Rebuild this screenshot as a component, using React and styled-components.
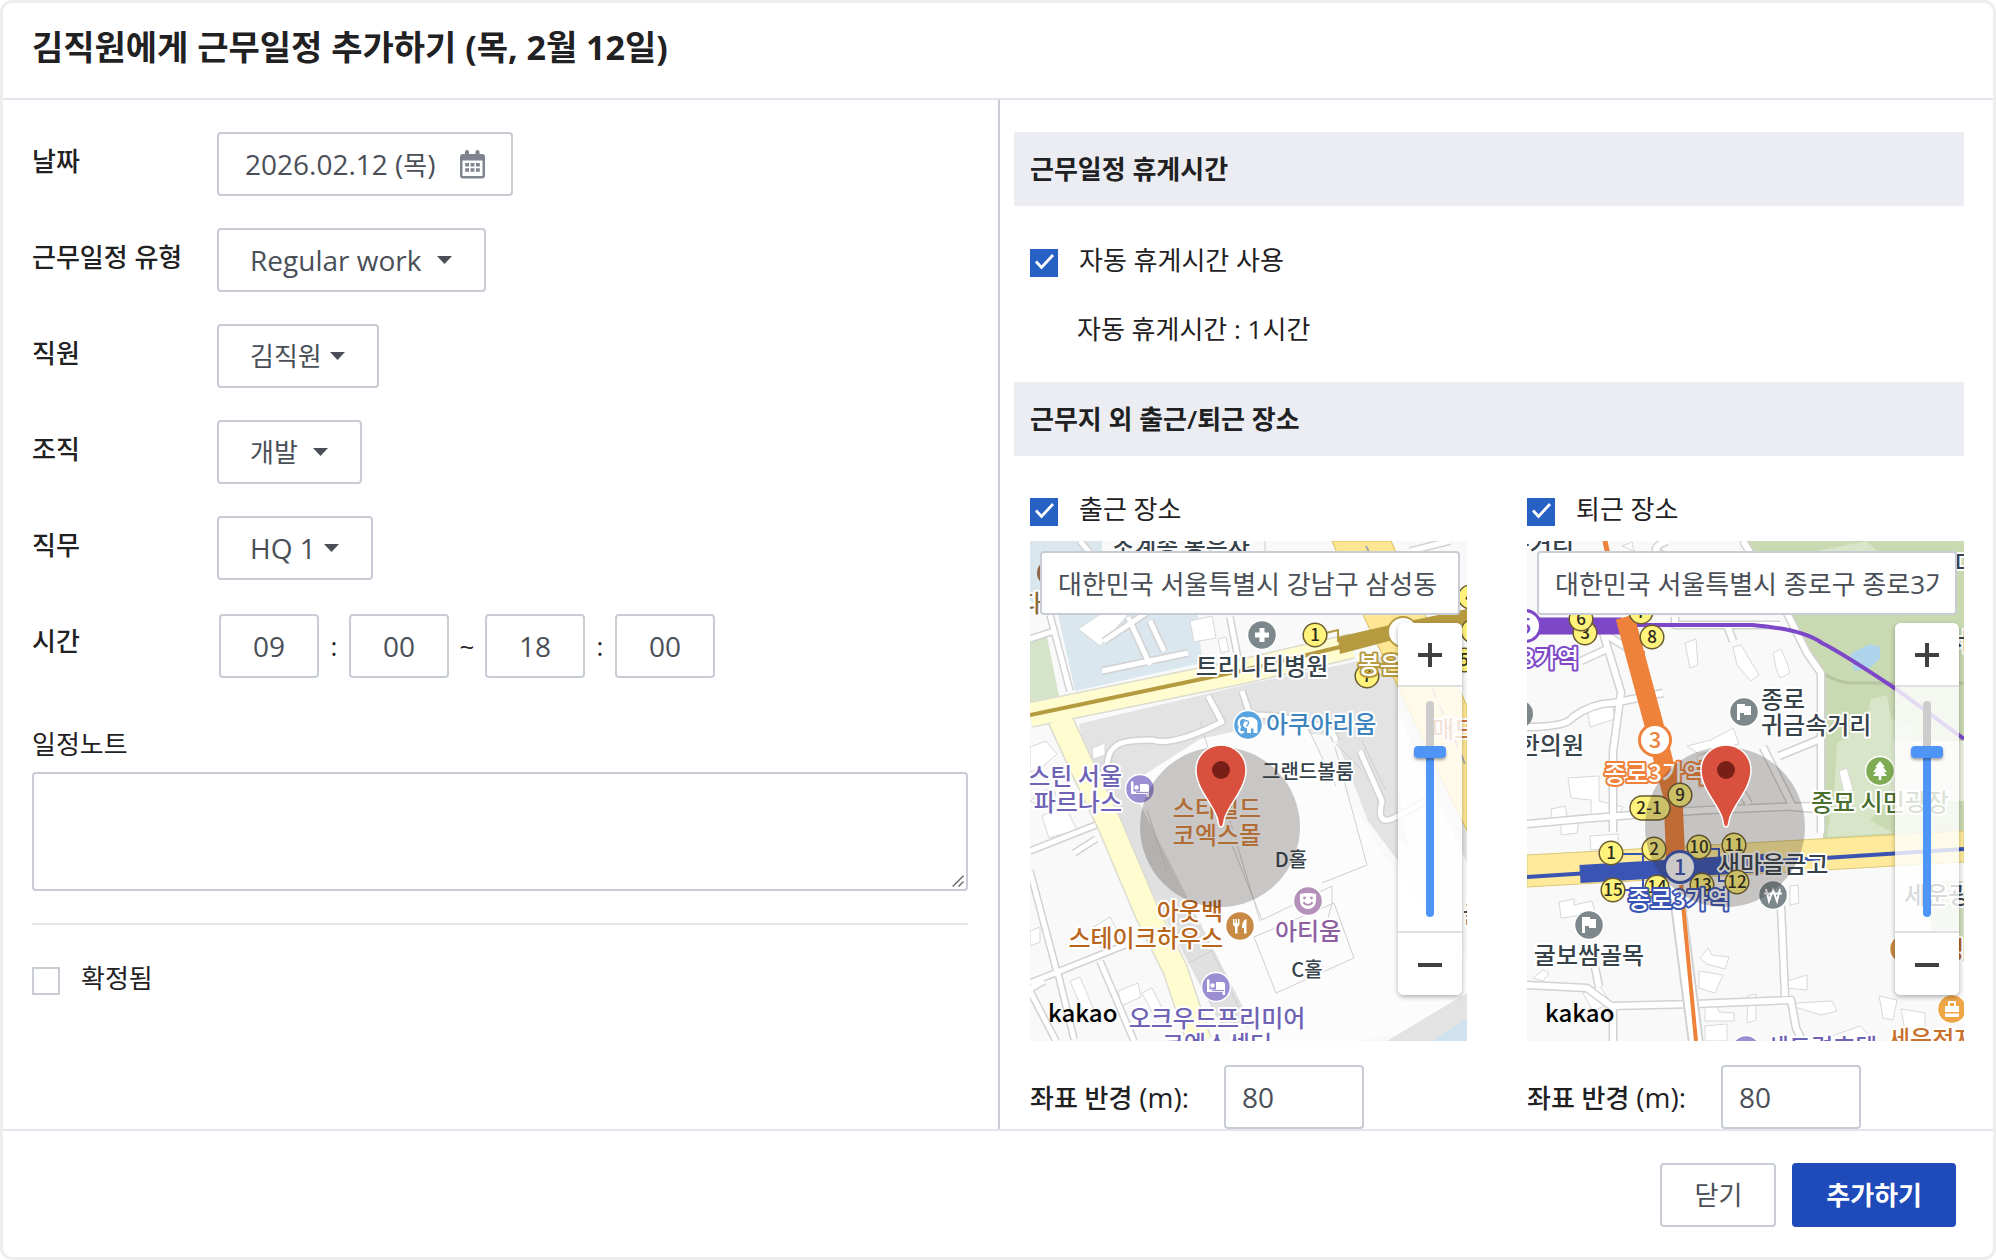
import React, { useState } from "react";
import styled, { createGlobalStyle } from "styled-components";

const GlobalStyle = createGlobalStyle`
*{
  box-sizing:border-box;
}
body{
  margin:0;
  background:#fff;
}
body, button, input, select, textarea{
  font-family:"Open Sans","Noto Sans CJK KR",sans-serif;
  font-size:26px;
  line-height:36px;
  color:#1f2123;
}
`;

const Modal = styled.div`
display:flex;
flex-direction:column;
height:100vh;
border:3px solid #eee;
border-radius:12px;
background:#fff;
overflow:hidden;
`;

const Header = styled.header`
padding:20px 29px 27px;
border-bottom:2px solid #e4e5ec;
& h1{
  margin:0;
  font-size:34px;
  line-height:48px;
  font-weight:bold;
}
`;

const Body = styled.div`
display:grid;
grid-template-columns:1fr 1fr;
flex:1;
min-height:0;
`;

const LeftPane = styled.section`
padding:32px 30px 0 29px;
overflow:hidden;
`;

const RightPane = styled.section`
padding:32px 29px 0 14px;
border-left:2px solid #c8ccd5;
overflow:hidden;
`;

const Fields = styled.div`
display:flex;
flex-direction:column;
gap:32px;
`;

const FieldRow = styled.div`
display:flex;
align-items:center;
height:64px;
`;

const FieldLabel = styled.label`
width:185px;
padding-bottom:6px;
font-weight:500;
`;

// latin letters and digits run one step larger than hangul
const Latin = styled.span`
font-size:28px;
`;

const boxBorder = `
border:2px solid #c8ccd5;
border-radius:4px;
background:#fff;
color:#4a4f57;
`;

const DateButton = styled.button`
${boxBorder}
display:flex;
align-items:center;
gap:24px;
height:64px;
padding:0 26px;
color:#4a4f57;
cursor:pointer;
`;

const SelectBox = styled.div`
${boxBorder}
display:flex;
align-items:center;
gap:${(props) => (props.$wide ? "15px" : "8px")};
height:64px;
padding:0 32px 0 31px;
& select{
  appearance:none;
  border:none;
  outline:none;
  padding:0;
  background:none;
  font-size:${(props) => (props.$latin ? "28px" : "26px")};
  color:#4a4f57;
}
`;

const TimeRow = styled.div`
display:flex;
align-items:center;
padding:4px 0 0 2px;
`;

const TimeInput = styled.input`
${boxBorder}
width:100px;
height:64px;
font-size:28px;
text-align:center;
`;

const TimeMark = styled.span`
width:${(props) => (props.$wide ? "36px" : "30px")};
text-align:center;
`;

const NoteLabel = styled.label`
display:block;
margin:50px 0 10px;
`;

const resizeGrip = `url("data:image/svg+xml,%3Csvg xmlns='http://www.w3.org/2000/svg' viewBox='0 0 18 18'%3E%3Cpath d='M2 15L15 2M9 15l6-6' fill='none' stroke='%23666' stroke-width='1.6'/%3E%3C/svg%3E")`;

const Note = styled.textarea`
${boxBorder}
display:block;
width:100%;
height:119px;
padding:12px;
resize:vertical;
&::-webkit-scrollbar{
  width:18px;
  height:18px;
}
&::-webkit-resizer{
  background:${resizeGrip} no-repeat;
}
`;

const Divider = styled.hr`
margin:32px 0 38px;
border:none;
border-top:2px solid #e8e8e8;
`;

const CheckLabel = styled.label`
display:flex;
align-items:center;
gap:21px;
height:36px;
& span{
  padding-bottom:6px;
}
`;

const checkMark = `url("data:image/svg+xml,%3Csvg xmlns='http://www.w3.org/2000/svg' viewBox='0 0 28 28'%3E%3Cpath d='M6 12.500l5.500 6L23 6' fill='none' stroke='white' stroke-width='2.8'/%3E%3C/svg%3E")`;

const Check = styled.input`
appearance:none;
flex:none;
width:28px;
height:28px;
margin:0;
border:2px solid #c8ccd5;
background:#fff;
&:checked{
  border:none;
  background:#2861c4 ${checkMark};
}
`;

const SectionTitle = styled.h2`
margin:0;
padding:19px 16px;
background:#ecedf2;
font-size:26px;
line-height:36px;
font-weight:600;
`;

const BreakInfo = styled.div`
padding:39px 16px 34px;
& p{
  margin:30px 0 0 47px;
  line-height:37px;
}
`;

const Places = styled.div`
display:grid;
grid-template-columns:1fr 1fr;
gap:60px;
padding:38px 0 0 16px;
`;

const MapBox = styled.div`
position:relative;
height:500px;
margin:11px 0 24px;
overflow:hidden;
& > svg{
  display:block;
  width:100%;
  height:100%;
}
`;

const Address = styled.input`
${boxBorder}
position:absolute;
top:10px;
left:10px;
width:calc(100% - 17px);
height:64px;
padding:0 16px;
`;

const ZoomControl = styled.div`
position:absolute;
top:82px;
right:5px;
display:flex;
flex-direction:column;
width:64px;
height:372px;
border-radius:6px;
overflow:hidden;
background:rgba(255,255,255,0.8);
box-shadow:0 2px 5px rgba(0,0,0,0.3);
`;

const ZoomButton = styled.button`
display:flex;
align-items:center;
justify-content:center;
height:62px;
padding:2px 0 0;
border:none;
background:#fff;
cursor:pointer;
`;

const ZoomTrack = styled.div`
display:flex;
flex:1;
justify-content:center;
padding:14px 0;
border:solid #e0e0e0;
border-width:2px 0;
`;

const ZoomRange = styled.input`
appearance:none;
writing-mode:vertical-lr;
direction:rtl;
width:32px;
height:216px;
margin:0;
background:none;
&::-webkit-slider-runnable-track{
  width:8px;
  border-radius:4px;
  background:linear-gradient(to top, #4f95f7 ${(props) => props.value}%, #ccc ${(props) => props.value}%);
}
&::-webkit-slider-thumb{
  appearance:none;
  width:32px;
  height:12px;
  margin-left:-12px;
  border-radius:4px;
  background:#4f95f7;
  box-shadow:0 2px 3px rgba(0,0,0,0.35);
}
`;

const RadiusRow = styled.div`
display:flex;
align-items:center;
justify-content:space-between;
width:334px;
& label{
  font-weight:500;
}
`;

const RadiusInput = styled.input`
${boxBorder}
width:140px;
height:64px;
padding:0 16px;
font-size:28px;
`;

const Footer = styled.footer`
display:flex;
justify-content:flex-end;
gap:16px;
padding:32px 37px 30px;
border-top:2px solid #e4e5ec;
`;

const Button = styled.button`
height:64px;
padding:0 32px;
border:2px solid ${(props) => (props.$primary ? "#1e4bb9" : "#c8ccd5")};
border-radius:4px;
background:${(props) => (props.$primary ? "#1e4bb9" : "#fff")};
color:${(props) => (props.$primary ? "#fff" : "#4a4f57")};
font-weight:${(props) => (props.$primary ? "bold" : "normal")};
cursor:pointer;
`;

const MapText = styled.text`
font-family:"Noto Sans CJK KR",sans-serif;
font-size:${(props) => (props.$small ? "20px" : "24px")};
font-weight:500;
text-anchor:${(props) => props.$anchor || "middle"};
fill:${(props) => props.$color || "#37434b"};
stroke:${(props) => props.$halo || "#fff"};
stroke-width:4px;
stroke-linejoin:round;
paint-order:stroke;
`;

const KakaoText = styled.text`
font-family:"Noto Sans CJK KR",sans-serif;
font-size:24px;
font-weight:500;
fill:#000;
`;

const ExitText = styled.text`
font-family:"Noto Sans CJK KR",sans-serif;
font-size:17px;
font-weight:500;
text-anchor:middle;
fill:#2b2a20;
`;

const StationText = styled.text`
font-family:"Noto Sans CJK KR",sans-serif;
font-size:22px;
font-weight:500;
text-anchor:middle;
`;

const CalendarIcon = () => (
  <svg width="25" height="29" viewBox="0 0 25 29">
    <path fill="#7f8390" fillRule="evenodd" d="M5 2a2 2 0 0 1 4 0v2h6.500V2a2 2 0 0 1 4 0v2H22a3 3 0 0 1 3 3v18.500a3 3 0 0 1-3 3H3a3 3 0 0 1-3-3V7a3 3 0 0 1 3-3h2zM2.500 10.500v15.500h20V10.500z" />
    <path fill="#7f8390" d="M5.200 13h3.800v3.600H5.200zm5.400 0h3.800v3.600h-3.800zm5.400 0h3.800v3.600H16zM5.200 18.200h3.800v3.600H5.200zm5.400 0h3.800v3.600h-3.800zm5.400 0h3.800v3.600H16z" />
  </svg>
);

const Caret = () => (
  <svg width="15" height="10" viewBox="0 0 15 10">
    <path d="M0 1h15L7.500 9z" fill="#4a4f57" />
  </svg>
);

const glyphs = {
  plus: <path d="M-2.500-7h5v4.500h4.500v5H2.500V7h-5V2.500H-7v-5h4.500z" />,
  flag: <path d="M-7-8h8v2h6v9h-7V1h-4v7h-3z" />,
  bed: (
    <>
      <path d="M-9-7.500h2.500v10H0V-5h6.500A2.500 2.500 0 0 1 9-2.500V8H6.500V5h-13H-9z" />
      <circle cx="-3.500" cy="-1.500" r="2.200" />
      <path d="M-4 3.500H8" stroke="#9b8ed3" strokeWidth="1.200" />
    </>
  ),
  fork: <path d="M-7-7h1.500v4h1v-4h1.500v4h1v-4H-.500v5a3 3 0 0 1-2 2.800V7.500h-2.500V.800a3 3 0 0 1-2-2.800zM6.500-7V7.500H4V2H2c0-4 1-8 4.500-9z" />,
  smile: (
    <>
      <path d="M-8-7Q0-9 8-7V0a8 8 0 0 1-16 0z" />
      <path d="M-4.500 1a5 5 0 0 0 9 0" fill="none" stroke="#b491b9" strokeWidth="1.800" />
      <circle cx="-3.500" cy="-3" r="1.400" fill="#b491b9" />
      <circle cx="3.500" cy="-3" r="1.400" fill="#b491b9" />
    </>
  ),
  elephant: (
    <>
      <path d="M-2-7q4-2 8 0 4 2 3.500 6V8H5.500V3.500H3V8h-4V3q-3 0-4-3z" />
      <path d="M-1-6q-6-3-8 2-1 4 1 6-2 4 1 5.500 2 .500 2.500-1.500" fill="none" stroke="#fff" strokeWidth="2.200" />
      <path d="M-3-4q4-1 3.500 2T-2 1" fill="none" stroke="#59a3de" strokeWidth="1.300" />
    </>
  ),
  won: (
    <path d="M-7-6l3 12L0-5l4 11L7-6M-9-1.500H9" fill="none" stroke="#fff" strokeWidth="2" />
  ),
  tree: <path d="M0-10l5 6H3l4 5H4l3 4H1.300v4h-2.600V5H-7l3-4h-3l4-5h-2z" />,
  bag: (
    <>
      <path d="M-7-3H7v6H-7zM-7 4.500H7V8H-7z" />
      <path d="M-3-3v-4h6v4" fill="none" stroke="#fff" strokeWidth="1.800" />
    </>
  ),
};

const Poi = ({ x, y, color = "#7d888d", icon }) => (
  <g transform={`translate(${x} ${y})`}>
    <circle r="14.500" fill={color} stroke="#fff" strokeWidth="1.500" />
    <g fill="#fff">{glyphs[icon]}</g>
  </g>
);

const Exit = ({ x, y, n }) => (
  <g>
    <circle cx={x} cy={y} r="11.800" fill="#fff37c" stroke="#6a5c30" strokeWidth="1.500" />
    <ExitText x={x} y={y + 6}>{n}</ExitText>
  </g>
);

const Station = ({ x, y, n, color }) => (
  <g>
    <circle cx={x} cy={y} r="15.500" fill="#fff" stroke={color} strokeWidth="3" />
    <StationText x={x} y={y + 8} fill={color}>{n}</StationText>
  </g>
);

// range circle with the pin standing in its centre
const Range = ({ x }) => <circle cx={x} cy="286" r="80" fill="#2e2722" opacity="0.25" />;

const Pin = ({ x }) => (
  <g transform={`translate(${x} 286)`}>
    <path d="M0 0c-3 0-2.500-4-3.500-8C-7-22-25-38-25-57a25 25 0 0 1 50 0C25-38 7-22 3.500-8 2.500-4 3 0 0 0z" fill="#d9503f" stroke="#fff" strokeWidth="1.500" />
    <circle cy="-57" r="9" fill="#782017" />
  </g>
);

// roads are painted twice: grey edge first, then the surface
const Roads = ({ lines, width, color = "#fff", edge = "#d2d2d2" }) => (
  <g fill="none" strokeLinejoin="round">
    {lines.map((d) => <path key={d} d={d} stroke={edge} strokeWidth={width + 3} />)}
    {lines.map((d) => <path key={d} d={d} stroke={color} strokeWidth={width} />)}
  </g>
);

const GangnamMap = () => (
  <svg viewBox="0 0 437 500" preserveAspectRatio="xMidYMid slice" aria-hidden="true">
    <rect width="437" height="500" fill="#f9f9f9" />
    <path d="M0 0h72v10H60v64H25L0 60zM28 74h140l4 48L45 150z" fill="#dae7ef" />
    <path d="M0 94l17 2 12 59-29 6z" fill="#d5e3c8" />
    <path d="M49 183L215 144l153-32v60l69 150v-110L368 146l-10 40 20 120-45-40-28-70-70-12-50 10-120 60z" fill="#e3e3e3" />
    <path d="M49 183l166-39 153-32v80l-64-2L240 200 90 270z" fill="#e3e3e3" />
    <path d="M60 215l22-8 18 46 24-20 66 160 30 90h-30L80 270z" fill="#e0e0e0" />
    <path d="M100 243l70-45 100-22 85 140 82 100v64l-110 20h-97z" fill="#fcfcfc" />
    <path d="M304 190l64-30v160l-30-40z" fill="#e3e3e3" />
    <path d="M437 452l-80 48h80z" fill="#e3e3e3" />
    <path d="M437 478l-36 22h36z" fill="#cfe2ee" />
    <g fill="#fff" stroke="#d8d8d8">
      <path d="M48 88l22 17 28-31-20-6zM160 80l22-5 4 22-22 4zM188 98l8-2 3 14-8 2zM0 206l16-6 11 13-16 14-11 4zM62 207l13-5v12l-12 4z" />
      <path d="M12 275l22-12 13 26-28 8zM0 390l10-4v15l-10 4zM62 387l18-11 15 29-20 11zM40 440l10-4 16 38-8 8zM88 450l20-8 3 14-20 9zM112 452l10-5 12 24-9 6zM0 260l18-12 8 4-8 16z" />
    </g>
    <g fill="none" stroke="#cfcfcf">
      <path d="M117 269l20 60M170 180l60 200M202 304l30 75 70-34v18l-4 14M305 206l32 118-45 18M224 396l80-34 20 55-78 35zM158 422l24-12 36 76M235 0v10M185 10l12-10M272 175l34 70M306 203l25 25M332 200l24 50" />
    </g>
    <Roads
      width={5}
      lines={[
        "M20 74l20 76",
        "M0 98l24-8",
        "M74 100l60-40M98 76l22 48M72 130l86-18M120 80l14 30",
        "M200 76l10 52",
        "M178 155l14 26q-50 25-70 18-30 0-36 6-12 8-8 35",
        "M212 150l8 24q40 0 60 10 22 0 26 16",
        "M0 310l66-26M66 298l-22 14M0 330l28 105M0 442l95-38M28 432l16 66M70 420l34 80M0 450l26 50M14 440l-14 8",
        "M120 0l-6 10M60 12L50 0M380 10l40-10",
        "M330 210l22 50q-6 24 10 18 20-10 38-20",
      ]}
    />
    <path d="M302 0h59l76 165v125l-69-144-35-72z" fill="#fee794" stroke="#d8bd5c" />
    <path d="M336 5l10 20M366 65l70 160" stroke="#a8a8a8" strokeWidth="2" strokeDasharray="10 8" />
    <Roads width={23} color="#fffcd0" edge="#dcdcd0" lines={["M0 174l210-43 112-26", "M30 178l22 48 27 56 38 90 28 56 24 72"]} />
    <path d="M0 174l210-44 100-24" fill="none" stroke="#b59a40" strokeWidth="4" />
    <path d="M308 96l52-12 77-16v15l-74 16-53 14z" fill="#b59a40" />
    <path d="M296 92l12-3v12" fill="none" stroke="#b59a40" strokeWidth="2" />

    <circle cx="20" cy="32" r="13" fill="#8d6748" />
    <MapText x="12" y="71" $anchor="end" $color="#8a6d3b">다</MapText>
    <MapText x="151" y="14">조계종 봉은사</MapText>
    <Exit x={285} y={94} n="1" />
    <Exit x={337} y={135} n="7" />
    <Exit x={440} y={56} n="4" />
    <Exit x={443} y={90} n="6" />
    <Exit x={434} y={119} n="5" />
    <circle cx="373" cy="91" r="15" fill="#fff" stroke="#b59a40" strokeWidth="2" />
    <MapText x="328" y="132" $anchor="start" $color="#fff" $halo="#b59a40">봉은사역</MapText>
    <Poi x={232} y={94} icon="plus" />
    <MapText x="232" y="134">트리니티병원</MapText>
    <Poi x={218} y={184} color="#59a3de" icon="elephant" />
    <MapText x="236" y="192" $anchor="start" $color="#3d84bf">아쿠아리움</MapText>
    <MapText x="402" y="197" $anchor="start" $color="#c9733b">매드포갈릭</MapText>
    <MapText $small x="232" y="238" $anchor="start">그랜드볼룸</MapText>
    <MapText x="92" y="244" $anchor="end" $color="#6f63b5">스틴 서울</MapText>
    <MapText x="92" y="270" $anchor="end" $color="#6f63b5">파르나스</MapText>
    <Poi x={110} y={248} color="#9b8ed3" icon="bed" />
    <MapText x="187" y="276" $color="#dd843c">스타필드</MapText>
    <MapText x="187" y="303" $color="#dd843c">코엑스몰</MapText>
    <MapText $small x="261" y="326">D홀</MapText>
    <Poi x={278} y={360} color="#b491b9" icon="smile" />
    <MapText x="278" y="399" $color="#8e5ea2">아티움</MapText>
    <MapText $small x="277" y="436">C홀</MapText>
    <MapText x="193" y="379" $anchor="end" $color="#b8651b">아웃백</MapText>
    <MapText x="193" y="406" $anchor="end" $color="#b8651b">스테이크하우스</MapText>
    <Poi x={210} y={385} color="#c98a45" icon="fork" />
    <Poi x={186} y={446} color="#9b8ed3" icon="bed" />
    <MapText x="187" y="486" $color="#6f63b5">오크우드프리미어</MapText>
    <MapText x="187" y="512" $color="#6f63b5">코엑스센터</MapText>
    <MapText x="433" y="382" $anchor="start">글래드</MapText>
    <Range x="190" />
    <Pin x="191" />
    <KakaoText x="18" y="481">kakao</KakaoText>
  </svg>
);

const JongnoMap = () => (
  <svg viewBox="0 0 437 500" preserveAspectRatio="xMidYMid slice" aria-hidden="true">
    <rect width="437" height="500" fill="#f9f9f9" />
    <path d="M213 0l43 72 20 37 22 23-2 167 141-8V0z" fill="#c9dab2" />
    <path d="M340 0l-50 10h60zM310 202l28-18 6-26 16-4 4 24 20 6v70l-28 10-20 24-30-14zM306 258l60 34-66 4z" fill="#d8e5c8" />
    <path d="M366 200h71v60h-71z" fill="#eaf0e0" />
    <path d="M404 340h33v80h-33z" fill="#d2dfc0" />
    <path d="M323 113l20-10 10 3v12l-12 10-14 2z" fill="#aed3ea" />
    <path d="M296 132q14 10 30 10h111" fill="none" stroke="#b7c5a2" strokeWidth="3" />
    <g fill="#fff" stroke="#d8d8d8">
      <path d="M158 102l11-4 2 26-8 3zM206 106l8-2 18 30-8 6-14-16zM246 112l8-4 6 14 3 10-10 5-4-10zM60 168l25-8 3 18-25 8zM95 5l10-4 2 9zM312 230l8-3 6 22-9 3z" />
      <path d="M41 237l31-2v25l24 6-8 15-24-4v-18l-20-2zM24 268l14-3 2 10 12 4-2 13-16 2v-14l-9-2zM63 295l28-2v14l-27 2z" />
      <path d="M160 205l24-6 22-12 6 16-40 10zM170 215l24-6 4 30-26 8zM32 361l15-3v6l18-4 3 12-34 5zM173 417l8-10 4 7 17 2-4 12-18-5zM172 430l24 4-8 18-16-5zM178 463l10-4 4 12 15 1v8h-29zM221 455l8-2v26l-9 3zM178 485l22-2v17h-22zM270 462l35-2 5 10-16 4-26-8zM260 440l20-6v15l-20-2zM352 455l18 4-4 20-10-2-2-12zM374 468l24 4v28h-18zM305 495l28-10 12 12M56 452l16-8 12 18-18 8zM6 437l10-8 6 3-6 8zM263 345l8-1 1 18-9 2z" />
    </g>
    <Roads
      width={6}
      lines={[
        "M0 283q150-15 288-18",
        "M0 186q40 0 46-10 20-14 40-14l50-10",
        "M74 85l20 66-8 60v80",
        "M76 92l36 22M80 108l-26 12M140 0q-20 8-4 14M200 84l6 16",
        "M148 76v8h105",
        "M0 444l60 3 24 18 84-2 96-4 5 28 20 40M68 426l4 20M86 466v34",
        "M216 0l44 72 20 40 14 20v160",
        "M252 215l44-18M236 206l30 60 24 2M254 365l4 90M198 225l24 38",
      ]}
    />
    <path d="M148 340l22 170" stroke="#d2d2d2" strokeWidth="16" />
    <path d="M148 340l22 170" stroke="#fff" strokeWidth="12" />
    <path d="M0 314l437-24v31L0 346z" fill="#feea9a" stroke="#dac778" />
    <path d="M78 0l3 14" stroke="#ef823b" strokeWidth="5" />
    <path d="M0 85h95" stroke="#7d47c7" strokeWidth="17" />
    <path d="M95 84h130q50 4 70 18 20 10 74 46l68 50" fill="none" stroke="#7d47c7" strokeWidth="4" />
    <path d="M98 76l28 104 20 76 3 70" fill="none" stroke="#ef823b" strokeWidth="19" />
    <path d="M116 110v22" stroke="#ef823b" strokeWidth="4" />
    <path d="M154 344l3 30 12 126" fill="none" stroke="#ef823b" strokeWidth="4" />
    <path d="M0 336l437-28" stroke="#3a54b4" strokeWidth="4" />
    <path d="M53 333l200-12" stroke="#3a54b4" strokeWidth="18" />
    <path d="M84 313h32v33M84 349h46M172 308h20v32h18" fill="none" stroke="#3a54b4" strokeWidth="2" />

    <Exit x={58} y={92} n="3" />
    <Exit x={54} y={78} n="6" />
    <Exit x={114} y={71} n="7" />
    <Exit x={125} y={96} n="8" />
    <Station x={-2} y={85} n="5" color="#7d47c7" />
    <MapText x="52" y="126" $anchor="end" $color="#fff" $halo="#7d47c7">종로3가역</MapText>
    <MapText x="47" y="12" $anchor="end">구거리</MapText>
    <circle cx="-8" cy="173" r="14" fill="#7d888d" />
    <MapText x="57" y="213" $anchor="end">한의원</MapText>
    <MapText x="77" y="241" $anchor="start" $color="#fff" $halo="#ef823b">종로3가역</MapText>
    <Station x={128} y={199} n="3" color="#ef823b" />
    <rect x="103" y="255" width="40" height="24" rx="12" fill="#fff37c" stroke="#6a5c30" strokeWidth="1.500" />
    <ExitText x="122" y="273">2-1</ExitText>
    <Exit x={153} y={254} n="9" />
    <Exit x={84} y={312} n="1" />
    <Exit x={127} y={308} n="2" />
    <Exit x={172} y={306} n="10" />
    <Exit x={207} y={304} n="11" />
    <Exit x={130} y={346} n="14" />
    <Exit x={175} y={344} n="13" />
    <Exit x={86} y={349} n="15" />
    <MapText x="101" y="367" $anchor="start" $color="#fff" $halo="#3a54b4">종로3가역</MapText>
    <Station x={153} y={326} n="1" color="#3a54b4" />
    <MapText x="191" y="332" $anchor="start">새마을금고</MapText>
    <Exit x={210} y={341} n="12" />
    <Poi x={246} y={354} icon="won" />
    <Poi x={217} y={171} icon="flag" />
    <MapText x="234" y="167" $anchor="start">종로</MapText>
    <MapText x="234" y="193" $anchor="start">귀금속거리</MapText>
    <Poi x={353} y={230} color="#7fab52" icon="tree" />
    <MapText x="284" y="270" $anchor="start" $color="#4a7030">종묘 시민광장</MapText>
    <Poi x={62} y={384} icon="flag" />
    <MapText x="62" y="423">굴보쌈골목</MapText>
    <MapText x="377" y="363" $anchor="start">세운광장</MapText>
    <Poi x={377} y={408} color="#c98a45" icon="fork" />
    <MapText x="437" y="417" $anchor="end" $color="#b8651b">포도청</MapText>
    <Poi x={425} y={468} color="#efa647" icon="bag" />
    <MapText x="361" y="507" $anchor="start" $color="#c8702c">세운전자상가</MapText>
    <Poi x={219} y={509} color="#9b8ed3" icon="bed" />
    <MapText x="240" y="515" $anchor="start" $color="#6f63b5">센트럴호텔</MapText>
    <MapText x="428" y="31" $anchor="start">대한</MapText>
    <MapText x="420" y="109" $anchor="start">서</MapText>
    <Range x="198" />
    <Pin x="199" />
    <KakaoText x="18" y="481">kakao</KakaoText>
  </svg>
);

const SelectField = ({ id, label, value, wide, latin }) => (
  <FieldRow>
    <FieldLabel htmlFor={id}>{label}</FieldLabel>
    <SelectBox $wide={wide} $latin={latin}>
      <select id={id} defaultValue={value}>
        <option value={value}>{value}</option>
      </select>
      <Caret />
    </SelectBox>
  </FieldRow>
);

const CheckField = ({ label, defaultChecked }) => (
  <CheckLabel>
    <Check type="checkbox" defaultChecked={defaultChecked} />
    <span>{label}</span>
  </CheckLabel>
);

const Place = ({ id, label, address, children }) => {
  const [zoom, setZoom] = useState(78);
  return (
    <div>
      <CheckField label={label} defaultChecked />
      <MapBox>
        {children}
        <Address aria-label={label} defaultValue={address} />
        <ZoomControl>
          <ZoomButton type="button" aria-label="확대" onClick={() => setZoom(Math.min(100, zoom + 7))}>
            <svg width="24" height="24" viewBox="0 0 24 24"><path d="M0 12h24M12 0v24" stroke="#404040" strokeWidth="4" /></svg>
          </ZoomButton>
          <ZoomTrack>
            <ZoomRange type="range" aria-label="지도 확대 수준" min="0" max="100" value={zoom} onChange={(e) => setZoom(Number(e.target.value))} />
          </ZoomTrack>
          <ZoomButton type="button" aria-label="축소" onClick={() => setZoom(Math.max(0, zoom - 7))}>
            <svg width="24" height="24" viewBox="0 0 24 24"><path d="M0 12h24" stroke="#404040" strokeWidth="4" /></svg>
          </ZoomButton>
        </ZoomControl>
      </MapBox>
      <RadiusRow>
        <label htmlFor={id}>좌표 반경 <Latin>(m):</Latin></label>
        <RadiusInput id={id} defaultValue="80" />
      </RadiusRow>
    </div>
  );
};

const App = () => {
  return (
    <Modal role="dialog" aria-labelledby="title">
      <GlobalStyle />
      <Header>
        <h1 id="title">김직원에게 근무일정 추가하기 (목, 2월 12일)</h1>
      </Header>
      <Body>
        <LeftPane>
          <Fields>
            <FieldRow>
              <FieldLabel htmlFor="date">날짜</FieldLabel>
              <DateButton type="button" id="date">
                <span><Latin>2026.02.12 (</Latin>목<Latin>)</Latin></span>
                <CalendarIcon />
              </DateButton>
            </FieldRow>
            <SelectField id="type" label="근무일정 유형" value="Regular work" wide latin />
            <SelectField id="employee" label="직원" value="김직원" />
            <SelectField id="group" label="조직" value="개발" wide />
            <SelectField id="duty" label="직무" value="HQ 1" latin />
            <FieldRow>
              <FieldLabel htmlFor="start-hour">시간</FieldLabel>
              <TimeRow>
                <TimeInput id="start-hour" defaultValue="09" />
                <TimeMark>:</TimeMark>
                <TimeInput aria-label="시작 분" defaultValue="00" />
                <TimeMark $wide>~</TimeMark>
                <TimeInput aria-label="종료 시" defaultValue="18" />
                <TimeMark>:</TimeMark>
                <TimeInput aria-label="종료 분" defaultValue="00" />
              </TimeRow>
            </FieldRow>
          </Fields>
          <NoteLabel htmlFor="note">일정노트</NoteLabel>
          <Note id="note" />
          <Divider />
          <CheckField label="확정됨" />
        </LeftPane>
        <RightPane>
          <SectionTitle>근무일정 휴게시간</SectionTitle>
          <BreakInfo>
            <CheckField label="자동 휴게시간 사용" defaultChecked />
            <p>자동 휴게시간 : 1시간</p>
          </BreakInfo>
          <SectionTitle>근무지 외 출근/퇴근 장소</SectionTitle>
          <Places>
            <Place id="radius-in" label="출근 장소" address="대한민국 서울특별시 강남구 삼성동">
              <GangnamMap />
            </Place>
            <Place id="radius-out" label="퇴근 장소" address="대한민국 서울특별시 종로구 종로3가">
              <JongnoMap />
            </Place>
          </Places>
        </RightPane>
      </Body>
      <Footer>
        <Button type="button">닫기</Button>
        <Button type="button" $primary>추가하기</Button>
      </Footer>
    </Modal>
  );
};

export default App;
